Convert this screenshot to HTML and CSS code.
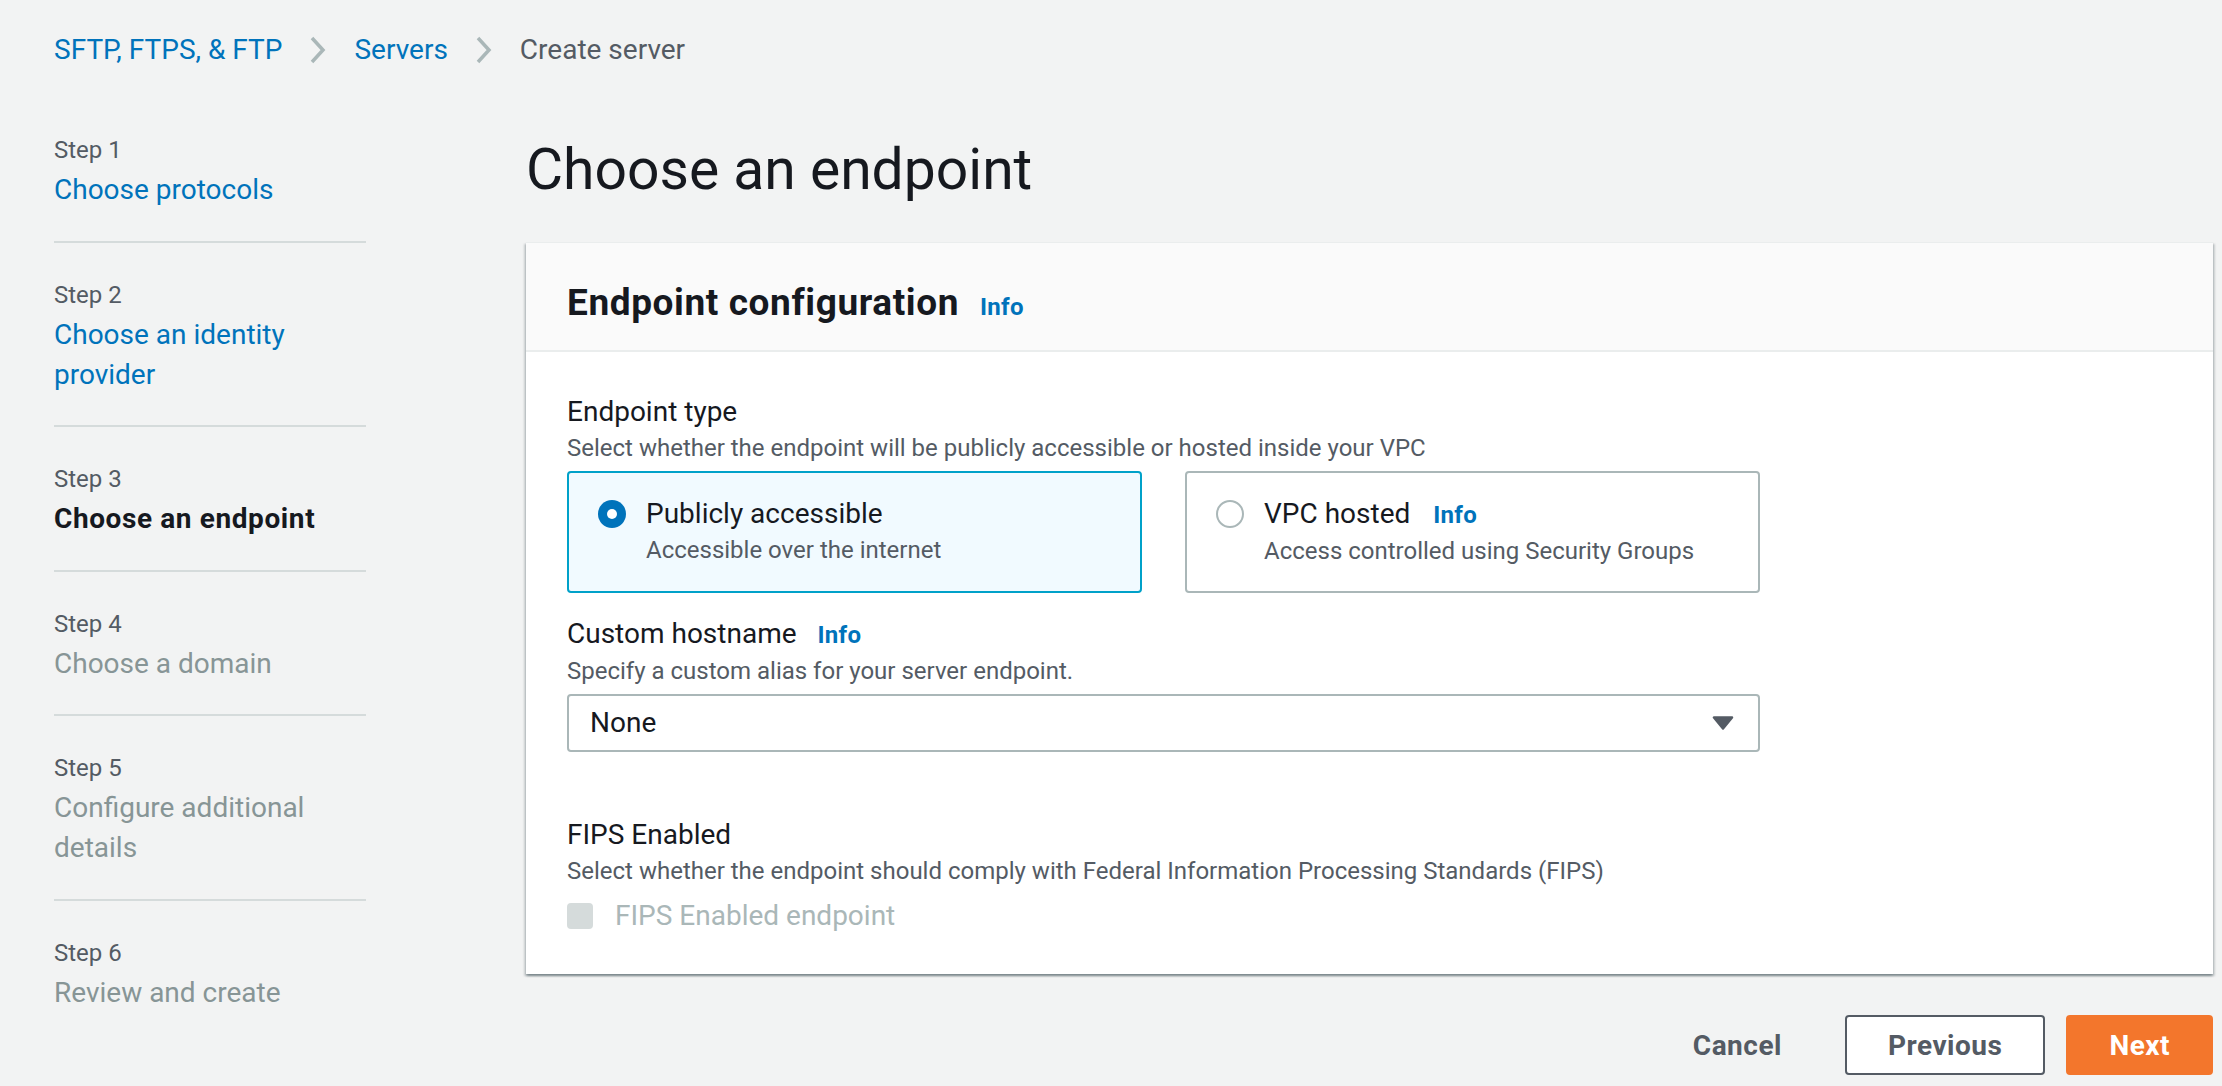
FILE: index.html
```html
<!DOCTYPE html>
<html lang="en">
<head>
<meta charset="utf-8">
<title>Create server</title>
<link rel="stylesheet" href="styles.css">
</head>
<body>
<div class="page">
  <nav class="breadcrumb">
    <a class="crumb-link">SFTP, FTPS, &amp; FTP</a>
    <svg class="chev" width="20" height="28" viewBox="0 0 20 28"><polyline points="4,2 15,14 4,26" fill="none" stroke="#aab7b8" stroke-width="3.5"/></svg>
    <a class="crumb-link">Servers</a>
    <svg class="chev" width="20" height="28" viewBox="0 0 20 28"><polyline points="4,2 15,14 4,26" fill="none" stroke="#aab7b8" stroke-width="3.5"/></svg>
    <span class="crumb-current">Create server</span>
  </nav>

  <div class="layout">
    <ul class="steps">
      <li class="step">
        <div class="step-label">Step 1</div>
        <div class="step-title link">Choose protocols</div>
      </li>
      <li class="step">
        <div class="step-label">Step 2</div>
        <div class="step-title link">Choose an identity provider</div>
      </li>
      <li class="step">
        <div class="step-label">Step 3</div>
        <div class="step-title current">Choose an endpoint</div>
      </li>
      <li class="step">
        <div class="step-label">Step 4</div>
        <div class="step-title disabled">Choose a domain</div>
      </li>
      <li class="step">
        <div class="step-label">Step 5</div>
        <div class="step-title disabled">Configure additional details</div>
      </li>
      <li class="step">
        <div class="step-label">Step 6</div>
        <div class="step-title disabled">Review and create</div>
      </li>
    </ul>

    <main class="main">
      <h1 class="page-title">Choose an endpoint</h1>

      <section class="card">
        <header class="card-header">
          <h2 class="card-title">Endpoint configuration</h2>
          <a class="info">Info</a>
        </header>
        <div class="card-body">
          <div class="field">
            <div class="field-label">Endpoint type</div>
            <div class="field-desc">Select whether the endpoint will be publicly accessible or hosted inside your VPC</div>
            <div class="tiles">
              <div class="tile selected">
                <svg class="radio" width="28" height="28" viewBox="0 0 28 28"><circle cx="14" cy="14" r="14" fill="#0073bb"/><circle cx="14" cy="14" r="5" fill="#ffffff"/></svg>
                <div class="tile-text">
                  <div class="tile-title">Publicly accessible</div>
                  <div class="tile-desc">Accessible over the internet</div>
                </div>
              </div>
              <div class="tile">
                <svg class="radio" width="28" height="28" viewBox="0 0 28 28"><circle cx="14" cy="14" r="13" fill="#ffffff" stroke="#aab7b8" stroke-width="2"/></svg>
                <div class="tile-text">
                  <div class="tile-title">VPC hosted <a class="info">Info</a></div>
                  <div class="tile-desc">Access controlled using Security Groups</div>
                </div>
              </div>
            </div>
          </div>

          <div class="field field-hostname">
            <div class="field-label">Custom hostname <a class="info">Info</a></div>
            <div class="field-desc">Specify a custom alias for your server endpoint.</div>
            <div class="select">
              <span class="select-value">None</span>
              <svg class="caret" width="22" height="14" viewBox="0 0 22 14"><path d="M2 1.5 H20 L11 12.5 Z" fill="#545b64" stroke="#545b64" stroke-width="2.5" stroke-linejoin="round"/></svg>
            </div>
          </div>

          <div class="field field-fips">
            <div class="field-label">FIPS Enabled</div>
            <div class="field-desc">Select whether the endpoint should comply with Federal Information Processing Standards (FIPS)</div>
            <div class="checkbox-row">
              <span class="checkbox"></span>
              <span class="checkbox-label">FIPS Enabled endpoint</span>
            </div>
          </div>
        </div>
      </section>

      <div class="actions">
        <button class="btn btn-link">Cancel</button>
        <button class="btn btn-normal">Previous</button>
        <button class="btn btn-primary">Next</button>
      </div>
    </main>
  </div>
</div>
</body>
</html>
```

FILE: styles.css
```css
* { box-sizing: border-box; }

html, body {
  margin: 0;
  padding: 0;
  background: #f2f3f3;
}

body {
  font-family: Roboto, "Liberation Sans", Arial, sans-serif;
  color: #16191f;
  font-size: 28px;
  line-height: 40px;
}

.page {
  padding: 30px 9px 0 54px;
}

/* breadcrumb */
.breadcrumb {
  display: flex;
  align-items: center;
  gap: 26px;
  height: 40px;
}
.crumb-link { color: #0073bb; text-decoration: none; }
.crumb-current { color: #545b64; }
.chev { display: block; }

.layout {
  display: flex;
  gap: 160px;
  margin-top: 60px;
}

/* steps sidebar */
.steps {
  list-style: none;
  margin: 0;
  padding: 4px 0 0 0;
  width: 312px;
  flex: none;
}
.step {
  padding: 36px 0 30.5px;
  border-bottom: 2px solid #d5dbdb;
}
.step:first-child { padding-top: 0; }
.step:last-child { border-bottom: none; }
.step-label {
  font-size: 24px;
  line-height: 32px;
  color: #545b64;
}
.step-title {
  margin-top: 4px;
  line-height: 40px;
}
.step-title.link { color: #0073bb; }
.step-title.current { font-weight: 700; color: #16191f; letter-spacing: 0.6px; }
.step-title.disabled { color: #879596; }

/* main */
.main { flex: 1; min-width: 0; }

.page-title {
  margin: 0 0 32px;
  font-size: 57px;
  line-height: 80px;
  font-weight: 400;
  color: #16191f;
}

.card {
  background: #ffffff;
  border-top: 1px solid #eaeded;
  box-shadow: 0 2px 2px 0 rgba(0, 28, 36, 0.3), 2px 2px 2px 0 rgba(0, 28, 36, 0.15), -2px 2px 2px 0 rgba(0, 28, 36, 0.15);
}

.card-header {
  display: flex;
  align-items: baseline;
  gap: 21px;
  background: #fafafa;
  padding: 36px 41px 23px;
  border-bottom: 2px solid #eaeded;
}
.card-title {
  margin: 0;
  font-size: 37px;
  line-height: 48px;
  font-weight: 700;
  letter-spacing: 0.6px;
}

.info {
  color: #0073bb;
  font-weight: 700;
  font-size: 24px;
  text-decoration: none;
  letter-spacing: 0.3px;
}

.card-body {
  padding: 42px 41px 38px;
}

.field { max-width: 1193px; }
.field-label {
  line-height: 36px;
}
.field-label .info { margin-left: 14px; }
.field-desc {
  font-size: 24px;
  line-height: 32px;
  color: #545b64;
  margin-top: 2px;
}

/* tiles */
.tiles {
  display: grid;
  grid-template-columns: 1fr 1fr;
  gap: 43px;
  margin-top: 7px;
}
.tile {
  display: flex;
  align-items: flex-start;
  gap: 20px;
  height: 122px;
  padding: 21px 28px 0 29px;
  border: 2px solid #aab7b8;
  border-radius: 4px;
  background: #ffffff;
}
.tile.selected {
  border-color: #00a1c9;
  background: #f1faff;
}
.radio { flex: none; margin-top: 6px; }
.tile-title { line-height: 40px; }
.tile-title .info { margin-left: 16px; }
.tile-desc {
  font-size: 24px;
  line-height: 32px;
  color: #545b64;
}

/* select */
.field-hostname { margin-top: 23px; }
.select {
  display: flex;
  align-items: center;
  justify-content: space-between;
  height: 58px;
  margin-top: 7px;
  padding: 0 24px 0 21px;
  border: 2px solid #aab7b8;
  border-radius: 4px;
  background: #ffffff;
}
.select-value { color: #16191f; }
.caret { display: block; }

/* fips */
.field-fips { margin-top: 65px; }
.checkbox-row {
  display: flex;
  align-items: center;
  gap: 22px;
  margin-top: 9px;
}
.checkbox {
  width: 26px;
  height: 26px;
  border-radius: 4px;
  background: #d5dbdb;
  flex: none;
}
.checkbox-label { color: #aab7b8; }

/* actions */
.actions {
  display: flex;
  justify-content: flex-end;
  gap: 21px;
  margin-top: 41px;
}
.btn {
  font-family: inherit;
  font-size: 28px;
  font-weight: 700;
  letter-spacing: 0.5px;
  height: 60px;
  padding: 0 41px;
  border-radius: 4px;
  border: 2px solid transparent;
  background: transparent;
  color: #545b64;
  cursor: pointer;
}
.btn-link { padding: 0 40px 0 42px; }
.btn-normal {
  background: #ffffff;
  border-color: #545b64;
}
.btn-primary {
  background: #f3762c;
  border-color: #f3762c;
  color: #ffffff;
}
```
